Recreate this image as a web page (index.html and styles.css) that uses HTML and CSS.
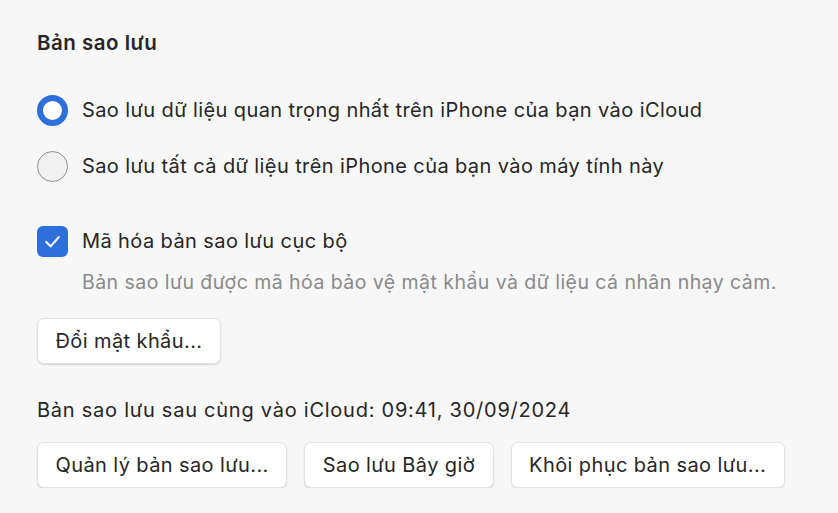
FILE: index.html
```html
<!DOCTYPE html>
<html lang="vi">
<head>
<meta charset="utf-8">
<title>Bản sao lưu</title>
<link rel="stylesheet" href="styles.css">
</head>
<body>
<main class="panel">
  <h2 class="title">Bản sao lưu</h2>

  <div class="radios">
    <label class="row">
      <span class="radio radio-on"></span>
      <span class="label">Sao lưu dữ liệu quan trọng nhất trên iPhone của bạn vào iCloud</span>
    </label>
    <label class="row">
      <span class="radio"></span>
      <span class="label">Sao lưu tất cả dữ liệu trên iPhone của bạn vào máy tính này</span>
    </label>
  </div>

  <label class="row check-row">
    <span class="checkbox">
      <svg viewBox="0 0 32 32" width="31" height="31"><path d="M9.5 16.5 L14 21 L22.5 11.5" fill="none" stroke="#fff" stroke-width="2.2" stroke-linecap="round" stroke-linejoin="round"/></svg>
    </span>
    <span class="label">Mã hóa bản sao lưu cục bộ</span>
  </label>
  <p class="desc">Bản sao lưu được mã hóa bảo vệ mật khẩu và dữ liệu cá nhân nhạy cảm.</p>

  <div class="btn-row first">
    <button class="btn">Đổi mật khẩu...</button>
  </div>

  <p class="status">Bản sao lưu sau cùng vào iCloud: 09:41, 30/09/2024</p>

  <div class="btn-row">
    <button class="btn">Quản lý bản sao lưu...</button>
    <button class="btn">Sao lưu Bây giờ</button>
    <button class="btn">Khôi phục bản sao lưu...</button>
  </div>
</main>
</body>
</html>
```

FILE: styles.css
```css
html, body {
  margin: 0;
  padding: 0;
  background: #f7f7f7;
}
body {
  font-family: Inter, "Noto Sans", "Liberation Sans", sans-serif;
  color: #262626;
  font-size: 20px;
  letter-spacing: 0.4px;
}
.panel {
  display: flex;
  flex-direction: column;
  align-items: flex-start;
  padding: 31px 0 0 37px;
}
.title {
  margin: 0;
  font-size: 20.5px;
  font-weight: 600;
  letter-spacing: 0.5px;
  line-height: 24px;
}
.radios {
  display: flex;
  flex-direction: column;
  gap: 24px;
  margin-top: 39px;
}
.row {
  display: flex;
  align-items: center;
  gap: 14px;
  height: 32px;
}
.label {
  line-height: 24px;
  white-space: nowrap;
}
.radio {
  box-sizing: border-box;
  width: 31px;
  height: 31px;
  border-radius: 50%;
  border: 1.5px solid #8e8e8e;
  background: #f1f1f1;
  flex: none;
}
.radio-on {
  border: 6.5px solid #2d6fdb;
  background: #fff;
}
.check-row {
  margin-top: 43px;
}
.checkbox {
  width: 31px;
  height: 31px;
  border-radius: 6px;
  background: #2d6fdb;
  flex: none;
  display: flex;
}
.desc {
  margin: 13px 0 0 45px;
  font-size: 19.5px;
  letter-spacing: 0.45px;
  line-height: 24px;
  color: #8a8a8a;
  white-space: nowrap;
}
.btn-row {
  display: flex;
  gap: 17px;
  margin-top: 20px;
}
.btn-row.first {
  margin-top: 24px;
}
.btn {
  font: inherit;
  letter-spacing: inherit;
  color: #262626;
  height: 46px;
  padding: 0 17.5px;
  background: #fff;
  border: 1px solid #e2e2e2;
  border-radius: 7px;
  box-shadow: 0 1px 1.5px rgba(0,0,0,0.14);
}
.status {
  margin: 34px 0 0;
  line-height: 24px;
  letter-spacing: 0.75px;
}
```
